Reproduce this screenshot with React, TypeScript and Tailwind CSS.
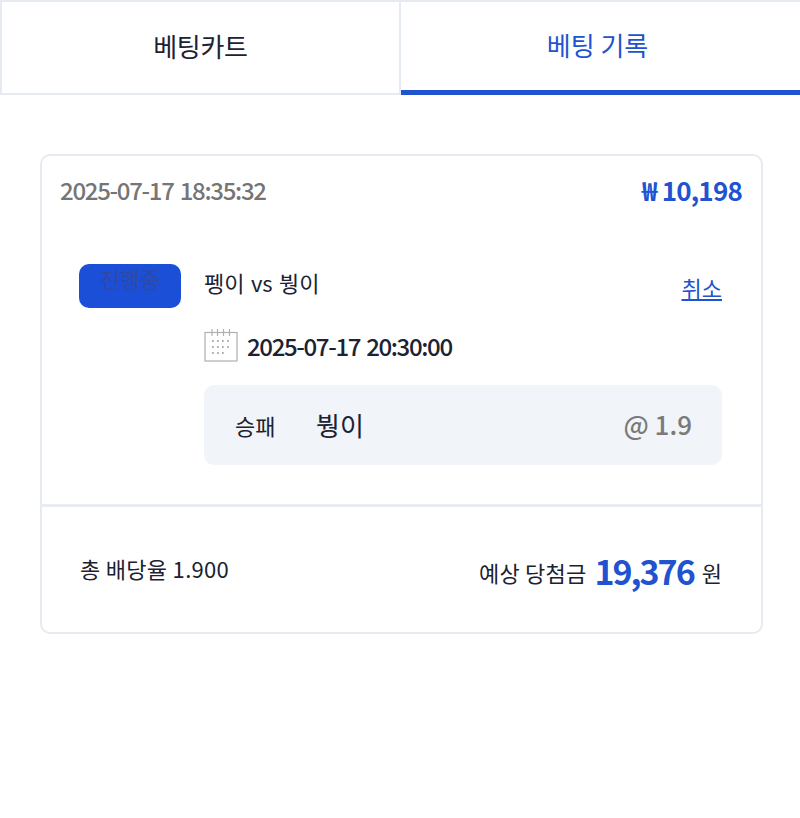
const font = "font-['Noto_Sans_CJK_KR','Noto_Sans',sans-serif]";

function CalendarIcon() {
  return (
    <svg width="34" height="34" viewBox="0 0 34 34" fill="none" stroke="#b0b0b0" strokeWidth="1.2">
      <rect x="1" y="4.500" width="32" height="28.500" />
      <path d="M8 1v7M13.500 1v7M19.500 1v7M25.500 1v7" />
      <path
        d="M8 13h2M13 13h2M18 13h2M23 13h2M8 19h2M13 19h2M18 19h2M23 19h2M8 25h2M13 25h2M18 25h2"
        strokeWidth="1.800"
        strokeDasharray="1.800 1"
      />
    </svg>
  );
}

export default function App() {
  return (
    <div className={`${font} h-[818px] w-[800px] bg-white text-[#1a2233]`}>
      {/* Tabs */}
      <div className="flex h-[95px]">
        <button className="h-full w-[401px] border-2 border-[#e6eaf1] pb-[3px] text-[26px] leading-none tracking-[-0.3px]">
          베팅카트
        </button>
        <button className="h-full flex-1 border-t-2 border-b-[5px] border-t-[#e6eaf1] border-b-[#2153d1] pr-[6px] pb-[3px] text-[26px] leading-none text-[#2153d1]">
          베팅 기록
        </button>
      </div>

      {/* Bet card */}
      <div className="mx-10 mt-[59px] h-[480px] w-[723px] rounded-[10px] border-2 border-[#e6eaf1]">
        <div className="flex h-[351px] flex-col border-b-[3px] border-[#e9ebf4] px-[18px]">
          <div className="flex h-[67px] items-center justify-between">
            <span className="text-[24px] font-medium tracking-[-1.3px] text-[#757575] [word-spacing:2px]">2025-07-17 18:35:32</span>
            <span className="mr-px text-[26px] font-bold tracking-[-0.8px] text-[#2153d1]">₩ 10,198</span>
          </div>

          <div className="mt-[41px] flex pl-[19px] pr-[21px]">
            <div className="flex h-[44px] w-[102px] shrink-0 justify-center rounded-[10px] bg-[#1b4fd8] text-[22px] leading-[28px] text-[#2f4aa0]">
              진행중
            </div>
            <div className="ml-[23px] flex-1">
              <div className="flex h-[44px] justify-between">
                <span className="text-[22px] leading-[36px] [word-spacing:1.5px]">펭이 vs 붱이</span>
                <a className="mt-[5px] text-[22px] leading-[36px] text-[#2153d1] underline">취소</a>
              </div>
              <div className="mt-[20px] flex items-center gap-[9px]">
                <div className="-mt-[3px]">
                  <CalendarIcon />
                </div>
                <span className="text-[24px] font-medium tracking-[-1.35px] [word-spacing:2px]">2025-07-17 20:30:00</span>
              </div>
              <div className="mt-[21px] flex h-[80px] items-center rounded-[10px] bg-[#f1f4f8] pl-[31px] pr-[30px]">
                <span className="w-[81px] pt-px text-[22px]">승패</span>
                <span className="-mt-[2px] flex-1 text-[26px]">붱이</span>
                <span className="-mt-[3px] text-[26px] font-medium text-[#7a7a7a]">@ 1.9</span>
              </div>
            </div>
          </div>
        </div>

        {/* Totals */}
        <div className="flex h-[125px] items-center justify-between pl-[38px] pr-[39px]">
          <span className="-mt-[2px] text-[22px] tracking-[0.3px]">총 배당율 1.900</span>
          <div className="mt-[2px] flex items-center gap-[8px]">
            <span className="mt-[3px] text-[22px] tracking-[0.2px]">예상 당첨금</span>
            <span className="text-[34px] font-bold tracking-[-2px] text-[#2153d1]">19,376</span>
            <span className="mt-[3px] text-[22px]">원</span>
          </div>
        </div>
      </div>
    </div>
  );
}
